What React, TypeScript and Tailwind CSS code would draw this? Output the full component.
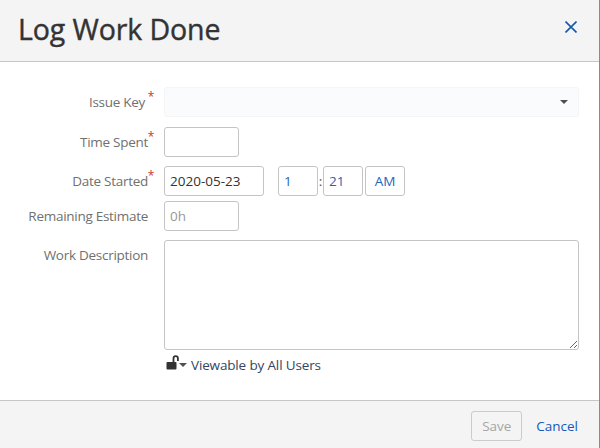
import type { ReactNode } from "react";

const field = "h-[30px] rounded-[3px] border border-[#c4c4c4] bg-white px-[5px] text-[13.5px] outline-none";

type RowProps = {
  label: string;
  required?: boolean;
  className: string;
  labelClass: string;
  children: ReactNode;
};

function Row({ label, required, className, labelClass, children }: RowProps) {
  return (
    <div className={`flex items-start ${className}`}>
      <label className="relative flex h-[30px] w-[148px] shrink-0 items-center justify-end whitespace-nowrap tracking-[-0.28px] text-[#707070]">
        <span className={labelClass}>{label}</span>
        {required && (
          <span className="absolute -right-[6px] top-0 text-[12px] leading-[20px] text-[#c9372c]">*</span>
        )}
      </label>
      <div className="ml-4 flex flex-1 items-start">{children}</div>
    </div>
  );
}

function UnlockIcon() {
  return (
    <svg width="13" height="15" viewBox="0 0 13 15" fill="none" className="mb-[5px]">
      <rect x="0.5" y="7" width="10" height="7.5" rx="1" fill="#333" />
      <path d="M7.5 8V3.4a2.2 2.2 0 0 1 4.4 0V6" stroke="#333" strokeWidth="1.8" />
    </svg>
  );
}

function App() {
  return (
    <div className="flex h-[448px] w-[600px] flex-col border-r border-[#8a8a8a] bg-white font-['Open_Sans',sans-serif] text-[13.5px]">
      <header className="flex h-[62px] shrink-0 items-start justify-between border-b border-[#c7c7c7] bg-[#f4f4f4] pl-[18px] pr-[22px]">
        <h1 className="mt-[9px] text-[28.5px] leading-[40px] tracking-[-0.1px] text-[#333] [-webkit-text-stroke:0.4px_#333]">
          Log Work Done
        </h1>
        <button aria-label="Close" className="mt-[21px]">
          <svg width="12" height="12" viewBox="0 0 12 12" stroke="#1558ad" strokeWidth="1.6">
            <path d="M0.5 0.5l11 11M11.5 0.5l-11 11" />
          </svg>
        </button>
      </header>

      <main className="flex-1 pr-5 pt-[25px]">
        <Row label="Issue Key" required className="" labelClass="mr-[3px]">
          <div className="flex h-[30px] flex-1 items-center justify-end rounded-[3px] border border-[#f4f5f7] bg-[#fafbfc] pr-[10px]">
            <svg width="8" height="4" viewBox="0 0 8 4" fill="#505050">
              <path d="M0 0h8L4 4z" />
            </svg>
          </div>
        </Row>
        <Row label="Time Spent" required className="mt-[10px]" labelClass="">
          <input className={`${field} w-[75px]`} />
        </Row>
        <Row label="Date Started" required className="mt-[9px]" labelClass="">
          <input className={`${field} w-[100px] text-[#333]`} defaultValue="2020-05-23" />
          <input className={`${field} ml-[14px] w-10 text-[#2465b8]`} defaultValue="1" />
          <span className="w-[5px] text-center leading-[30px] text-[#555]">:</span>
          <input className={`${field} w-10 text-[#2465b8]`} defaultValue="21" />
          <button className={`${field} ml-[2px] w-10 text-[#2465b8]`}>AM</button>
        </Row>
        <Row label="Remaining Estimate" className="mt-[5px]" labelClass="">
          <input className={`${field} w-[75px] placeholder:text-[#999]`} placeholder="0h" />
        </Row>
        <Row label="Work Description" className="mt-[9px]" labelClass="">
          <textarea className="h-[110px] w-full resize rounded-[3px] border border-[#c4c4c4] outline-none" />
        </Row>
        <div className="ml-[166px] mt-[4px] flex h-[22px] items-center text-[#344563]">
          <UnlockIcon />
          <svg width="8" height="4" viewBox="0 0 8 4" fill="#505050">
            <path d="M0 0h8L4 4z" />
          </svg>
          <span className="ml-[4px] tracking-[-0.15px]">Viewable by All Users</span>
        </div>
      </main>

      <footer className="flex h-[48px] shrink-0 items-start justify-end border-t border-[#c7c7c7] bg-[#f4f4f4] pr-[21px] pt-[10px]">
        <button className="h-[30px] w-[51px] rounded-[3px] border border-[#cbcbcb] text-[#a5a5a5]">Save</button>
        <button className="ml-[14px] h-[30px] text-[#1558bc]">Cancel</button>
      </footer>
    </div>
  );
}

export default App;
